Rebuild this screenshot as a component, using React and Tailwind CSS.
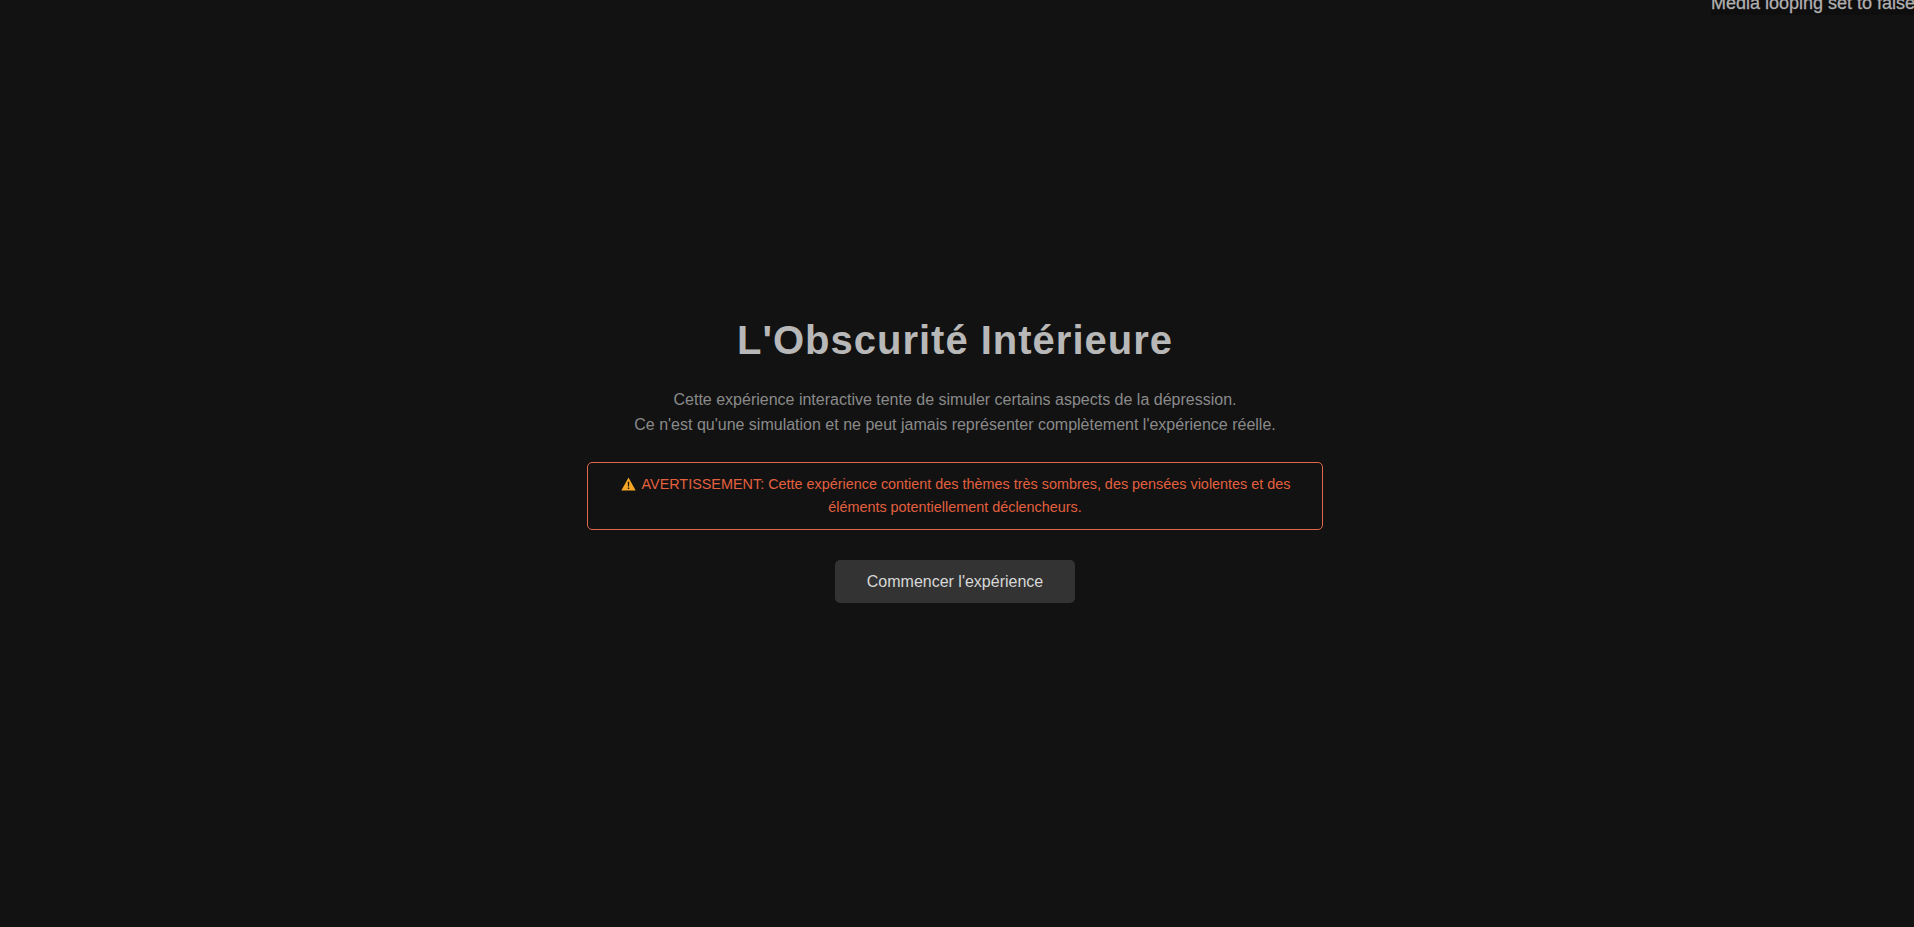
export default function App() {
  return (
    <div className="relative h-[927px] overflow-hidden bg-[#121212] pr-[4px] font-['Liberation_Sans',Arial,sans-serif] text-[#aaaaaa]">
      {/* debug overlay, cut off by the top edge */}
      <div className="absolute left-[1711px] top-[-7px] h-[22px] whitespace-nowrap bg-[#0e0e0e] text-[18px] leading-[21px] text-[#b0b0b0] [-webkit-text-stroke:0.3px_#b0b0b0]">
        Media looping set to false
      </div>

      <div className="flex h-full flex-col items-center pt-[317px]">
        <h1 className="text-[40px] leading-[46px] font-bold tracking-[1px] text-[#b8b8b8]">
          L'Obscurité Intérieure
        </h1>

        <p className="mt-[24px] text-center text-[16px] leading-[25px] text-[#8a8a8a]">
          Cette expérience interactive tente de simuler certains aspects de la dépression.
          <br />
          Ce n'est qu'une simulation et ne peut jamais représenter complètement l'expérience réelle.
        </p>

        <div className="mt-[25px] w-[736px] rounded-[5px] border border-[#e0674a] px-[15px] py-[10px] text-center text-[14.4px] leading-[23px] text-[#e2603f]">
          <svg viewBox="0 0 16 15" className="mr-[6px] ml-[1px] inline-block h-[14px] w-[15px] align-[-2px]">
            <path d="M8 .6.3 14.4h15.4z" fill="#f5a623" />
            <path d="M7.2 5.2h1.6l-.2 5H7.4zM7.2 11.2h1.6v1.6H7.2z" fill="#1c1408" />
          </svg>
          AVERTISSEMENT: Cette expérience contient des thèmes très sombres, des pensées violentes et des
          éléments potentiellement déclencheurs.
        </div>

        <button className="mt-[30px] h-[43px] rounded-[5px] bg-[#333333] px-[32px] text-[16px] text-[#d8d8d8]">
          Commencer l'expérience
        </button>
      </div>
    </div>
  );
}
